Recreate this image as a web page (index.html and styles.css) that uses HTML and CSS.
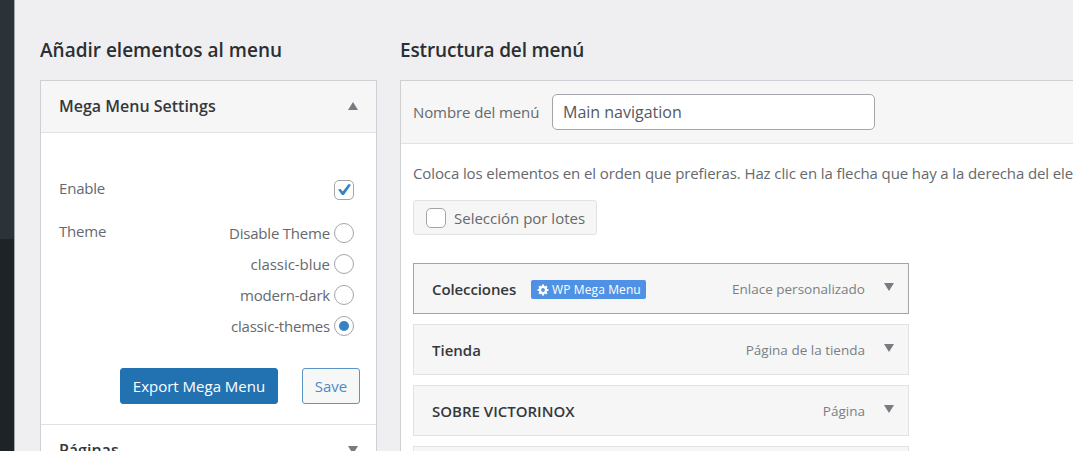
FILE: index.html
```
<!DOCTYPE html>
<html lang="es">
<head>
<meta charset="UTF-8">
<meta name="viewport" content="width=device-width, initial-scale=1.0">
<title>Menús</title>
<link rel="stylesheet" href="styles.css">
</head>
<body>
<div class="page">
  <div class="admin-menu">
    <div class="admin-menu-sub"></div>
  </div>

  <div class="settings-column">
    <h2>Añadir elementos al menu</h2>
    <div class="accordion">
      <div class="accordion-header">
        <h3>Mega Menu Settings</h3>
        <svg class="arrow" width="10" height="8" viewBox="0 0 10 8"><path d="M5 0L10 8H0Z"/></svg>
      </div>
      <div class="accordion-body">
        <div class="row enable-row">
          <span>Enable</span>
          <span class="checkbox">
            <svg width="18" height="18" viewBox="0 0 18 18"><path d="M3 8.6L5.6 8L7.8 10.5L13.6 3L16 3.7L8.9 14H7Z"/></svg>
          </span>
        </div>
        <div class="row theme-row">
          <span>Theme</span>
          <div class="themes">
            <label class="theme">Disable Theme<i class="radio"></i></label>
            <label class="theme theme-blue">classic-blue<i class="radio"></i></label>
            <label class="theme">modern-dark<i class="radio"></i></label>
            <label class="theme">classic-themes<i class="radio checked"></i></label>
          </div>
        </div>
        <div class="buttons">
          <button class="button primary">Export Mega Menu</button>
          <button class="button">Save</button>
        </div>
      </div>
      <div class="accordion-header closed">
        <h3>Páginas</h3>
        <svg class="arrow" width="10" height="8" viewBox="0 0 10 8"><path d="M0 0H10L5 8Z"/></svg>
      </div>
    </div>
  </div>

  <div class="menu-column">
    <h2 class="structure-title">Estructura del menú</h2>
    <div class="menu-edit">
      <div class="menu-name">
        <label class="name-label" for="menu-name">Nombre del menú</label>
        <input class="name-input" id="menu-name" type="text" value="Main navigation">
      </div>
      <div class="menu-body">
        <p class="help">Coloca los elementos en el orden que prefieras. Haz clic en la flecha que hay a la derecha del ele</p>
        <label class="bulk"><span class="checkbox"></span>Selección por lotes</label>
        <div class="menu-item active">
          <span class="item-title">Colecciones</span>
          <span class="badge">
            <svg class="gear" width="12" height="12" viewBox="0 0 12 12"><circle cx="6" cy="6" r="3"/><path d="M6 .6V3M6 9v2.4M.6 6H3M9 6h2.4M2.2 2.2L4 4M8 8l1.8 1.8M9.8 2.2L8 4M4 8L2.2 9.8"/></svg>
            WP Mega Menu
          </span>
          <span class="item-type">Enlace personalizado</span>
          <svg class="arrow" width="10" height="8" viewBox="0 0 10 8"><path d="M0 0H10L5 8Z"/></svg>
        </div>
        <div class="menu-item">
          <span class="item-title">Tienda</span>
          <span class="item-type">Página de la tienda</span>
          <svg class="arrow" width="10" height="8" viewBox="0 0 10 8"><path d="M0 0H10L5 8Z"/></svg>
        </div>
        <div class="menu-item">
          <span class="item-title">SOBRE VICTORINOX</span>
          <span class="item-type">Página</span>
          <svg class="arrow" width="10" height="8" viewBox="0 0 10 8"><path d="M0 0H10L5 8Z"/></svg>
        </div>
        <div class="menu-item"></div>
      </div>
    </div>
  </div>
</div>
</body>
</html>
```
FILE: styles.css
```
* {
  box-sizing: border-box;
}

body {
  margin: 0;
  background-color: #efeff1;
  font-family: "Open Sans", "Noto Sans", sans-serif;
  font-size: 15px;
  color: #65696d;
  overflow: hidden;
}

h2, h3, p {
  margin: 0;
}

.page {
  display: flex;
  height: 451px;
  overflow: hidden;
  white-space: nowrap;
}

.admin-menu {
  flex: none;
  width: 15px;
  background-color: #2c3338;
  border-right: 1px solid #a5a8ab;
  padding-top: 239px;
}

.admin-menu-sub {
  height: 212px;
  background-color: #1d2327;
}

.settings-column {
  flex: none;
  width: 337px;
  margin-left: 25px;
  padding-top: 38px;
}

.menu-column {
  flex: 1;
  min-width: 0;
  margin-left: 23px;
  padding-top: 38px;
}

h2 {
  font-size: 19px;
  font-weight: 600;
  line-height: 24px;
  margin-bottom: 18px;
  color: #2b2f33;
}

.structure-title {
  letter-spacing: -0.15px;
}

.accordion {
  border: 1px solid #cfd0d3;
  background-color: #fff;
}

.accordion-header {
  display: flex;
  justify-content: space-between;
  align-items: center;
  height: 52px;
  padding: 0 18px 1px 18px;
  background-color: #f6f6f6;
  border-bottom: 1px solid #e1e2e4;
}

.accordion-header.closed {
  padding-bottom: 0;
  background-color: #fff;
  border-top: 1px solid #e1e2e4;
}

h3 {
  font-size: 16px;
  font-weight: 600;
  color: #34383c;
}

.arrow {
  flex: none;
  fill: #787c82;
}

.accordion-body {
  height: 291px;
  padding: 43px 16px 0 18px;
}

.row {
  display: flex;
  justify-content: space-between;
  align-items: flex-start;
  line-height: 24px;
  padding-right: 6px;
  letter-spacing: -0.2px;
}

.enable-row {
  height: 43px;
}

.theme-row {
  height: 149px;
}

.checkbox {
  flex: none;
  width: 20px;
  height: 20px;
  border: 1px solid #a2a5a9;
  border-radius: 5px;
  background-color: #fff;
}

.checkbox svg {
  display: block;
  fill: #3582c4;
}

.enable-row .checkbox {
  margin-top: 4px;
}

.themes {
  padding-top: 1px;
}

.theme {
  display: flex;
  justify-content: flex-end;
  align-items: center;
  height: 31px;
  padding-bottom: 5px;
  gap: 4px;
}

.theme-blue {
  letter-spacing: -0.05px;
}

.radio {
  display: flex;
  justify-content: center;
  align-items: center;
  width: 20px;
  height: 20px;
  border: 1px solid #a2a5a9;
  border-radius: 50%;
}

.radio.checked::before {
  content: "";
  width: 10px;
  height: 10px;
  border-radius: 50%;
  background-color: #3582c4;
}

.buttons {
  display: flex;
  justify-content: flex-end;
  gap: 24px;
}

.button {
  width: 58px;
  height: 36px;
  padding: 0;
  border: 1px solid #5c94c6;
  border-radius: 3px;
  background-color: #f6f7f7;
  color: #5289bd;
  font: inherit;
}

.button.primary {
  width: 158px;
  border-color: #2271b1;
  background-color: #2271b1;
  color: #fff;
}

.menu-edit {
  height: 400px;
  border: 1px solid #cfd0d3;
  border-right: none;
  background-color: #fff;
}

.menu-name {
  display: flex;
  align-items: center;
  height: 63px;
  padding-left: 12px;
  background-color: #f6f6f6;
  border-bottom: 1px solid #e1e2e4;
}

.name-label {
  width: 139px;
  letter-spacing: -0.1px;
}

.name-input {
  width: 323px;
  height: 36px;
  padding: 0 10px;
  border: 1px solid #a2a5a9;
  border-radius: 5px;
  font: inherit;
  font-size: 16px;
  color: #55595e;
}

.menu-body {
  padding: 17px 0 0 12px;
}

.help {
  height: 39px;
  line-height: 24px;
  letter-spacing: -0.11px;
}

.bulk {
  display: inline-flex;
  align-items: center;
  width: 184px;
  height: 35px;
  padding-left: 12px;
  gap: 8px;
  border: 1px solid #e1e2e4;
  border-radius: 3px;
  background-color: #f6f6f6;
  margin-bottom: 28px;
}

.menu-item {
  display: flex;
  align-items: center;
  width: 496px;
  height: 51px;
  margin-bottom: 10px;
  padding: 0 14px 0 18px;
  border: 1px solid #e1e2e4;
  background-color: #f6f6f6;
}

.menu-item.active {
  border-color: #a2a5a9;
}

.menu-item .arrow {
  margin: 0 0 4px 19px;
}

.item-title {
  font-weight: 600;
  color: #34383c;
}

.active .item-title {
  letter-spacing: -0.1px;
}

.item-type {
  margin-left: auto;
  font-size: 13.5px;
  color: #7b7f84;
}

.badge {
  display: flex;
  align-items: center;
  width: 115px;
  height: 19px;
  margin: 2px 0 0 15px;
  padding-left: 6px;
  gap: 3px;
  border-radius: 2px;
  background-color: #4f92e5;
  color: #fff;
  font-size: 12px;
  letter-spacing: 0.1px;
}

.gear {
  flex: none;
  fill: none;
  stroke: #fff;
  stroke-width: 2.2;
}
```
